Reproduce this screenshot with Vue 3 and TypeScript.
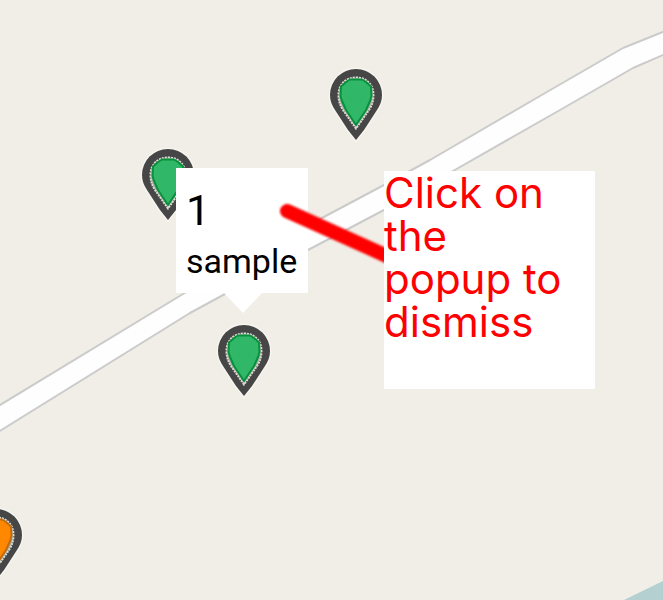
<script setup lang="ts">
import { ref } from 'vue'

interface Pin {
  id: number
  name: string
  x: number
  y: number
  tone: 'green' | 'orange'
}

const pins: Pin[] = [
  { id: 2, name: 'Marker 2', x: 168, y: 220, tone: 'green' },
  { id: 3, name: 'Marker 3', x: 356, y: 140, tone: 'green' },
  { id: 1, name: 'Marker 1', x: 244, y: 396, tone: 'green' },
  { id: 4, name: 'Marker 4', x: -4, y: 580, tone: 'orange' },
]

const popupOpen = ref(true)
</script>

<template>
  <main class="map">
    <svg class="layer" aria-hidden="true">
      <path
        class="road"
        d="M-5 408 L183 294 L210 279 L320 219 L384 185 L430 160 L540 96 L623 48 L670 29 L670 52 L633 68 L560 110 L453 171 L384 210 L308 250 L225 294 L190 313 L-5 434 Z"
      />
      <path class="water" d="M624 600 L663 581 L2663 -400 L2663 2600 L624 2600 Z" />
    </svg>

    <button
      v-for="pin in pins"
      :key="pin.id"
      class="pin"
      :class="pin.tone"
      type="button"
      :aria-label="pin.name"
      :style="{ left: pin.x + 'px', top: pin.y + 'px' }"
      @click="popupOpen = true"
    >
      <svg class="pin-art" viewBox="0 0 60 80" aria-hidden="true">
        <path
          class="halo"
          d="M30 76 L22 66 L9 46 C6 41 4 37 4 31 A26 26 0 0 1 56 31 C56 37 54 41 51 46 L38 66 Z"
        />
        <path
          class="shell"
          d="M30 76 L22 66 L9 46 C6 41 4 37 4 31 A26 26 0 0 1 56 31 C56 37 54 41 51 46 L38 66 Z"
        />
        <path
          class="rim"
          d="M30 64.5 L17 46 C14 41 12.5 37 12.5 31 C12.5 20 20 13.5 30 13.5 C40 13.5 47.5 20 47.5 31 C47.5 37 46 41 43 46 Z"
        />
        <path
          class="core"
          d="M24 15.5 H36 L40 18 L45 22.5 L45.5 32 L44 37 L40 46 L30 61 L20 46 L16 37 L14.5 32 L15 22.5 L20 18 Z"
        />
      </svg>
    </button>

    <button v-if="popupOpen" class="popup" type="button" @click="popupOpen = false">
      <span class="popup-title">1</span>
      <span class="popup-text">sample</span>
    </button>

    <svg v-if="popupOpen" class="layer" aria-hidden="true">
      <path class="pointer" d="M287 211 L400 262" />
    </svg>

    <p v-if="popupOpen" class="note">Click on the popup to dismiss</p>
  </main>
</template>

<style>
body {
  margin: 0;
}
</style>

<style scoped>
.map {
  position: relative;
  min-height: 100vh;
  overflow: hidden;
  background: #f0eee6;
}

.layer {
  position: absolute;
  inset: 0;
  width: 100%;
  height: 100%;
  pointer-events: none;
}

.road {
  fill: #fefefe;
  stroke: #cbcbcb;
  stroke-width: 2;
  stroke-linejoin: round;
}

.water {
  fill: #b5d0d0;
}

.pin {
  position: absolute;
  width: 60px;
  height: 80px;
  margin: -76px 0 0 -30px;
  padding: 0;
  border: 0;
  background: none;
  cursor: pointer;
}

.pin-art {
  display: block;
  width: 60px;
  height: 80px;
}

.halo {
  fill: none;
  stroke: #fff;
  stroke-opacity: 0.4;
  stroke-width: 3;
}

.shell {
  fill: #464646;
}

.rim {
  fill: #9fa59d;
  stroke: #d9ddd5;
  stroke-width: 2;
  stroke-dasharray: 2 1;
}

.core {
  stroke-width: 2;
  stroke-linejoin: round;
}

.green .core {
  fill: #31b768;
  stroke: #08913b;
}

.orange .core {
  fill: #ff8800;
  stroke: #c46a08;
}

.popup {
  position: absolute;
  left: 176px;
  top: 168px;
  display: flex;
  flex-direction: column;
  align-items: flex-start;
  gap: 3px;
  box-sizing: border-box;
  width: 132px;
  height: 125px;
  padding: 16px 10px;
  border: 0;
  background: #fff;
  color: #000;
  font-family: Roboto, sans-serif;
  text-align: left;
  cursor: pointer;
}

.popup::after {
  content: '';
  position: absolute;
  left: 48px;
  top: 100%;
  border: solid transparent;
  border-width: 20px 19px 0;
  border-top-color: #fff;
}

.popup-title {
  font-size: 43px;
  line-height: 52px;
}

.popup-text {
  font-size: 34px;
  line-height: 44px;
}

.pointer {
  fill: none;
  stroke: #f00;
  stroke-width: 14;
  stroke-linecap: round;
  filter: blur(1px);
}

.note {
  position: absolute;
  left: 384px;
  top: 171px;
  box-sizing: border-box;
  width: 211px;
  height: 218px;
  margin: 0;
  padding-right: 20px;
  background: #fff;
  color: #f00;
  font-family: Inter, sans-serif;
  font-size: 42px;
  line-height: 43px;
}
</style>
